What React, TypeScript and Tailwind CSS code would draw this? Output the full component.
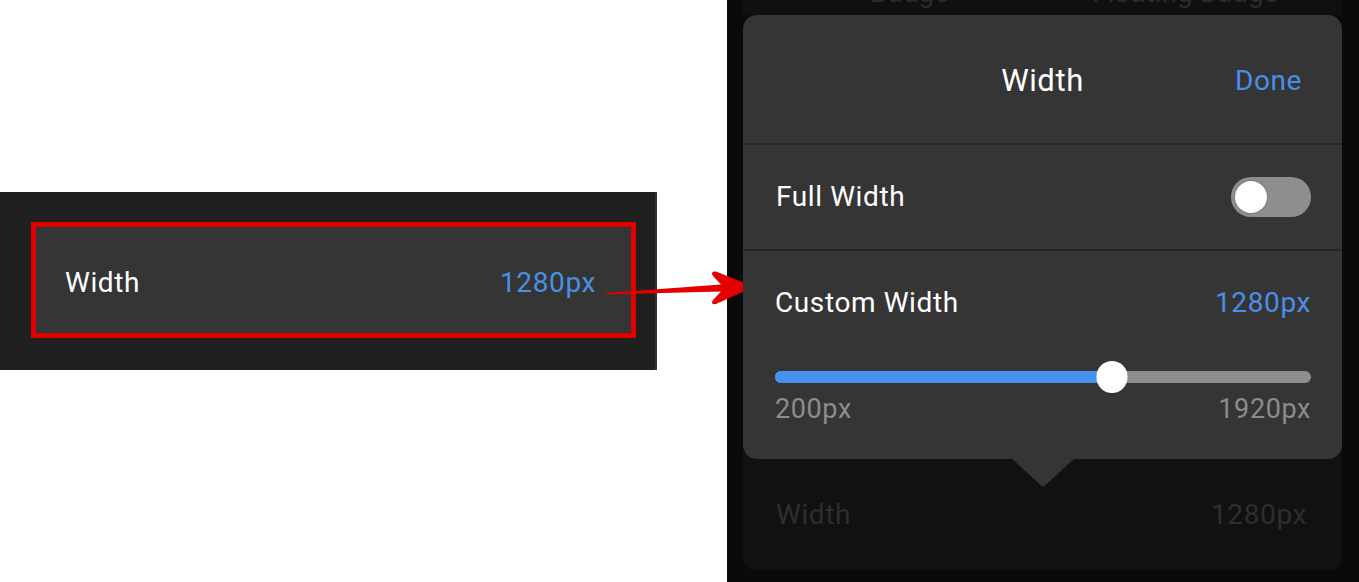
const font = { fontFamily: 'Roboto, "Noto Sans", sans-serif' };

const Toggle = () => (
  <div className="w-[80px] h-[40px] rounded-full bg-[#8e8e8e] p-[4px] flex items-center">
    <div className="w-[32px] h-[32px] rounded-full bg-white shadow-[0_0_2px_rgba(0,0,0,0.35)]" />
  </div>
);

const Slider = ({ value, min, max }: { value: number; min: number; max: number }) => {
  const pct = ((value - min) / (max - min)) * 100;
  return (
    <div className="relative h-[32px] flex items-center">
      <div className="w-full h-[12px] rounded-full bg-[#8e8e8e] overflow-hidden">
        <div className="h-full bg-[#4791ef]" style={{ width: `${pct}%` }} />
      </div>
      <div
        className="absolute top-0 w-[31px] h-[32px] rounded-full bg-white -translate-x-1/2"
        style={{ left: `${pct}%` }}
      />
    </div>
  );
};

const Arrow = () => (
  <svg className="absolute left-0 top-0 pointer-events-none" width="1359" height="582" viewBox="0 0 1359 582">
    <path
      d="M606 293 L721 284.5 L713 276 Q710 271 716 271.5 L747 284 Q752 287 747 290 L716 304 Q710 305 713 300 L721 291.5 L606 294.5 Z"
      fill="#e40000"
    />
  </svg>
);

export default function App() {
  return (
    <div className="relative w-[1359px] h-[582px] bg-white overflow-hidden flex items-start tracking-[0.6px]" style={font}>
      {/* left: settings row highlighted */}
      <div className="mt-[192px] w-[657px] h-[178px] bg-[#202020] border-r-2 border-[#343434] pt-[30px] pl-[31px]">
        <div className="w-[605px] h-[116px] border-[5px] border-[#e00000] bg-[#353535] flex items-center justify-between pl-[29px] pr-[35px] pt-[6px]">
          <span className="text-[28px] leading-none text-white">Width</span>
          <span className="text-[28px] leading-none text-[#4a90e2]">1280px</span>
        </div>
      </div>

      {/* right: popover */}
      <div className="ml-[70px] w-[632px] h-[582px] bg-[#0a0a0a] pl-[16px] pr-[17px]">
        <div className="h-[15px] bg-[#101010] overflow-hidden">
          <div className="flex text-[28px] leading-[28px] tracking-normal text-[#2b2b2b] -mt-[21px]">
            <span className="ml-[127px]">Badge</span>
            <span className="ml-[143px]">Floating Badge</span>
          </div>
        </div>

        <div className="relative">
          <div className="relative z-10 rounded-[14px] bg-[#353535] h-[444px] flex flex-col">
            <div className="h-[128px] grid grid-cols-[1fr_auto_1fr] items-center px-[40px] pt-[4px]">
              <div />
              <span className="text-[31px] text-white">Width</span>
              <span className="justify-self-end text-[28px] text-[#4a8fe6]">Done</span>
            </div>
            <div className="h-[2px] bg-[#262626]" />
            <div className="h-[104px] flex items-center justify-between pl-[33px] pr-[31px]">
              <span className="text-[28px] text-white">Full Width</span>
              <Toggle />
            </div>
            <div className="h-[2px] bg-[#262626]" />
            <div className="pt-[35px] pl-[32px] pr-[31px]">
              <div className="flex items-center justify-between h-[34px]">
                <span className="text-[28px] text-white">Custom Width</span>
                <span className="text-[28px] text-[#4a8fe6]">1280px</span>
              </div>
              <div className="mt-[41px]">
                <Slider value={1280} min={200} max={1920} />
              </div>
              <div className="flex justify-between text-[27px] leading-[30px] text-[#8c8c8c] mt-[1px]">
                <span>200px</span>
                <span>1920px</span>
              </div>
            </div>
          </div>
          <svg className="absolute z-10 left-[268px] top-[443px]" width="64" height="30" viewBox="0 0 64 30">
            <path d="M0 0 H64 L34.5 27 Q32 29.5 29.5 27 Z" fill="#353535" />
          </svg>
          <div className="h-[125px] -mt-[14px] pt-[14px] rounded-b-[14px] bg-[#111111] flex items-center justify-between pl-[33px] pr-[35px]">
            <span className="text-[28px] text-[#2e2e2e]">Width</span>
            <span className="text-[28px] text-[#2e2e2e]">1280px</span>
          </div>
        </div>
      </div>

      <Arrow />
    </div>
  );
}
